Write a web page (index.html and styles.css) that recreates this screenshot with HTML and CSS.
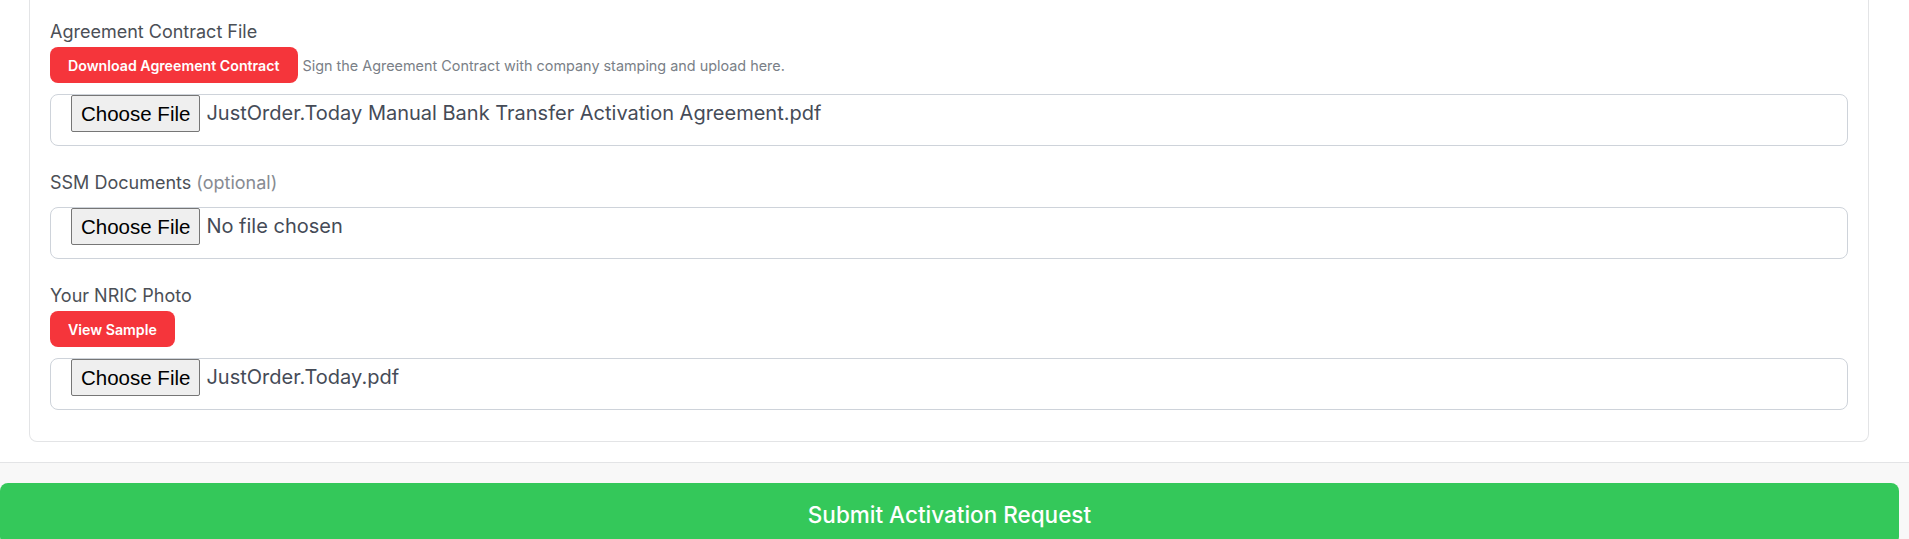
FILE: index.html
```html
<!DOCTYPE html>
<html lang="en">
<head>
<meta charset="utf-8">
<title>Activation Request</title>
<link rel="stylesheet" href="styles.css">
</head>
<body>
<main class="page">
  <section class="upper">
    <div class="card">
      <div class="field">
        <div class="label">Agreement Contract File</div>
        <div class="action-row">
          <button class="btn-red" type="button">Download Agreement Contract</button>
          <span class="hint">Sign the Agreement Contract with company stamping and upload here.</span>
        </div>
        <div class="file-box">
          <span class="choose">Choose File</span>
          <span class="file-name">JustOrder.Today Manual Bank Transfer Activation Agreement.pdf</span>
        </div>
      </div>
      <div class="field">
        <div class="label">SSM Documents <span class="muted">(optional)</span></div>
        <div class="file-box">
          <span class="choose">Choose File</span>
          <span class="file-name">No file chosen</span>
        </div>
      </div>
      <div class="field last">
        <div class="label">Your NRIC Photo</div>
        <div class="action-row">
          <button class="btn-red" type="button">View Sample</button>
        </div>
        <div class="file-box">
          <span class="choose">Choose File</span>
          <span class="file-name">JustOrder.Today.pdf</span>
        </div>
      </div>
    </div>
  </section>
  <footer class="footer">
    <button class="btn-submit" type="button">Submit Activation Request</button>
  </footer>
</main>
</body>
</html>
```

FILE: styles.css
```css
* { box-sizing: border-box; }
html, body { margin: 0; padding: 0; }
body {
  background: #ffffff;
  font-family: Inter, "Noto Sans", sans-serif;
  color: #4b5563;
  overflow: hidden;
}
.page { width: 1909px; }
.upper {
  background: #ffffff;
  padding: 0 40px 20px 29px;
  border-bottom: 1px solid #e3e4e6;
}
.card {
  border: 1px solid #e3e4e6;
  border-top: none;
  border-radius: 0 0 8px 8px;
  padding: 18px 20px 31px 20px;
}
.field { margin-bottom: 23px; }
.field.last { margin-bottom: 0; }
.label {
  font-size: 18px;
  line-height: 27px;
  color: #4b4f56;
  margin-bottom: 2px;
}
.muted { color: #878b92; }
.action-row {
  display: flex;
  align-items: center;
  gap: 5px;
}
.btn-red {
  background: #f5353b;
  color: #ffffff;
  border: none;
  border-radius: 8px;
  height: 36px;
  padding: 0 18px;
  font-family: Inter, "Noto Sans", sans-serif;
  font-size: 14.2px;
  font-weight: 600;
  cursor: pointer;
}
.hint {
  font-size: 14.4px;
  color: #7a7f87;
}
.file-box {
  margin-top: 11px;
  height: 52px;
  border: 1px solid #ced3da;
  border-radius: 8px;
  padding: 0 20px;
  display: flex;
  align-items: flex-start;
  gap: 6px;
}
.choose {
  display: inline-flex;
  align-items: center;
  height: 37px;
  padding: 0 9px;
  background: #efefef;
  border: 1px solid #767676;
  border-radius: 2px;
  font-family: "Liberation Sans", Arial, sans-serif;
  font-size: 20.5px;
  color: #000000;
}
.file-name {
  line-height: 37px;
  font-size: 20px;
  color: #454b57;
}
.footer {
  background: #f8f8f8;
  padding: 20px 10px 0 0;
}
.btn-submit {
  display: block;
  width: 100%;
  height: 62px;
  background: #34c85a;
  color: #ffffff;
  border: none;
  border-radius: 8px;
  font-family: Inter, "Noto Sans", sans-serif;
  font-size: 22.5px;
  font-weight: 500;
}
```
